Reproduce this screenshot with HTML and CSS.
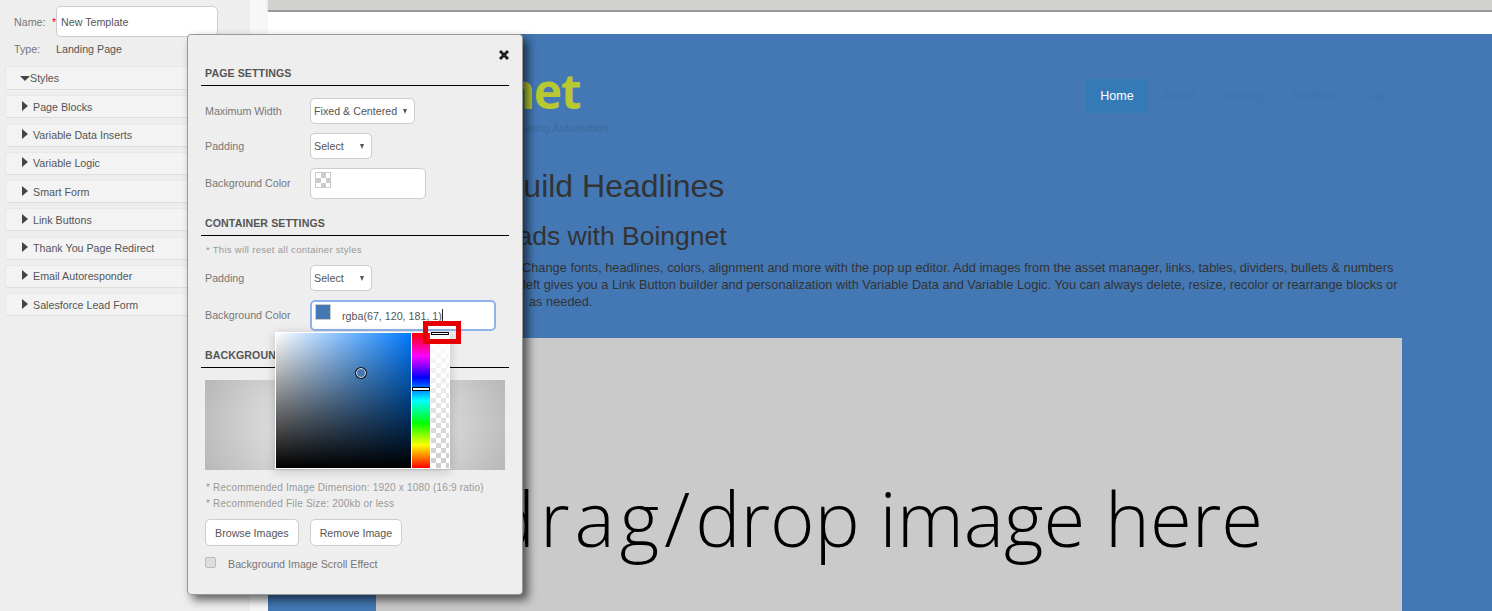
FILE: index.html
```html
<!DOCTYPE html>
<html lang="en">
<head>
    <meta charset="UTF-8">
    <title>New Template</title>
    <link rel="stylesheet" href="styles.css">
</head>
<body>
    <div class="app">
        <aside class="sidebar">
            <div class="name-row">
                <span class="side-label name-label">Name:</span>
                <span class="req">*</span>
                <div class="name-input">New Template</div>
            </div>
            <div class="type-row">
                <span class="side-label type-label">Type:</span>
                <span>Landing Page</span>
            </div>
            <div class="accordion">
                <div class="acc-item acc-open"><i class="arrow-down"></i>Styles</div>
                <div class="acc-item"><i class="arrow-right"></i>Page Blocks</div>
                <div class="acc-item"><i class="arrow-right"></i>Variable Data Inserts</div>
                <div class="acc-item"><i class="arrow-right"></i>Variable Logic</div>
                <div class="acc-item"><i class="arrow-right"></i>Smart Form</div>
                <div class="acc-item"><i class="arrow-right"></i>Link Buttons</div>
                <div class="acc-item"><i class="arrow-right"></i>Thank You Page Redirect</div>
                <div class="acc-item"><i class="arrow-right"></i>Email Autoresponder</div>
                <div class="acc-item"><i class="arrow-right"></i>Salesforce Lead Form</div>
            </div>
        </aside>
        <div class="gutter"></div>
        <main class="canvas">
            <div class="topbar"></div>
            <div class="white-strip"></div>
            <section class="page">
                <header class="page-header">
                    <div class="logo">
                        <div class="logo-name">Boingnet</div>
                        <div class="logo-tag">Marketing Automation</div>
                    </div>
                    <nav class="pills">
                        <a class="pill active">Home</a>
                        <a class="pill">About</a>
                        <a class="pill">Pricing</a>
                        <a class="pill">Another</a>
                        <a class="pill">Last</a>
                    </nav>
                </header>
                <h1 class="headline">Build Headlines</h1>
                <h2 class="subhead">Leads with Boingnet</h2>
                <p class="copy">
                    <span class="copy-line">Change fonts, headlines, colors, alignment and more with the pop up editor. Add images from the asset manager, links, tables, dividers, bullets &amp; numbers</span>
                    <span class="copy-line line-two">left gives you a Link Button builder and personalization with Variable Data and Variable Logic. You can always delete, resize, recolor or rearrange blocks or</span>
                    <span class="copy-line line-three">as needed.</span>
                </p>
                <div class="dropzone"><span class="drag-word">drag/</span>drop image here</div>
            </section>
        </main>
    </div>

    <div class="modal">
        <svg class="close" width="12" height="12" viewBox="0 0 12 12"><path d="M2 2l8 8M10 2l-8 8" stroke="#222" stroke-width="3"/></svg>

        <h3 class="section-title first">PAGE SETTINGS</h3>
        <div class="row row-first">
            <label>Maximum Width</label>
            <div class="select select-wide">Fixed &amp; Centered<i></i></div>
        </div>
        <div class="row">
            <label>Padding</label>
            <div class="select">Select<i></i></div>
        </div>
        <div class="row row-color">
            <label>Background Color</label>
            <div class="color-input"><span class="swatch swatch-empty"></span></div>
        </div>

        <h3 class="section-title">CONTAINER SETTINGS</h3>
        <div class="note note-reset">* This will reset all container styles</div>
        <div class="row">
            <label>Padding</label>
            <div class="select">Select<i></i></div>
        </div>
        <div class="row row-color">
            <label>Background Color</label>
            <div class="color-input focused"><span class="swatch swatch-blue"></span><span class="color-value">rgba(67, 120, 181, 1)</span><span class="caret"></span></div>
        </div>

        <h3 class="section-title">BACKGROUND IMAGE</h3>
        <div class="image-preview"></div>
        <div class="notes">
            <div class="note">* Recommended Image Dimension: 1920 x 1080 (16:9 ratio)</div>
            <div class="note">* Recommended File Size: 200kb or less</div>
        </div>
        <div class="buttons">
            <button class="btn">Browse Images</button>
            <button class="btn">Remove Image</button>
        </div>
        <div class="scroll-row">
            <span class="checkbox"></span>
            <span>Background Image Scroll Effect</span>
        </div>

        <div class="picker">
            <div class="sat">
                <span class="thumb"></span>
            </div>
            <div class="hue"><span class="hue-handle"></span></div>
            <div class="alpha"><span class="alpha-handle"></span></div>
        </div>
        <div class="highlight"></div>
    </div>
</body>
</html>
```

FILE: styles.css
```css
html, body { margin: 0; height: 611px; overflow: hidden; }
body { font-family: "Liberation Sans", Arial, sans-serif; font-size: 10.7px; color: #555; background: #eee; }
.app { display: flex; height: 611px; }

/* left sidebar */
.sidebar { width: 250px; flex: none; background: #eee; padding-top: 6px; box-sizing: border-box; }
.name-row { display: flex; align-items: center; height: 31px; padding-left: 14px; }
.side-label { color: #777; }
.name-label { width: 38px; }
.req { color: #f00; width: 4px; }
.name-input {
    width: 162px;
    height: 31px;
    box-sizing: border-box;
    line-height: 31px;
    padding-left: 4px;
    background: #fff;
    border: 1px solid #ccc;
    border-radius: 5px;
    color: #555;
}
.type-row { display: flex; height: 13px; margin-top: 6px; line-height: 13px; padding-left: 14px; color: #555; }
.type-label { width: 42px; }
.accordion { display: flex; flex-direction: column; gap: 5.25px; margin: 10px 10px 0 5px; }
.acc-item {
    display: flex;
    align-items: center;
    height: 23px;
    box-sizing: border-box;
    padding-left: 16px;
    background: #f3f3f3;
    border: 1px solid #e8e8e8;
    border-bottom-color: #ddd;
    border-radius: 3px;
    color: #555;
}
.acc-open { height: 24px; padding-left: 14px; }
.arrow-right {
    width: 0;
    height: 0;
    margin-right: 5px;
    border-left: 6px solid #444;
    border-top: 5px solid transparent;
    border-bottom: 5px solid transparent;
    position: relative;
    top: -1px;
}
.arrow-down {
    width: 0;
    height: 0;
    border-top: 5px solid #444;
    border-left: 5px solid transparent;
    border-right: 5px solid transparent;
}
.gutter { width: 18px; flex: none; background: #f7f7f7; }

/* page being edited */
.canvas { flex: 1; min-width: 0; background: #fff; display: flex; flex-direction: column; }
.topbar { height: 10px; flex: none; background: #d1d2cf; border-bottom: 2px solid #999; box-shadow: 0 1px 3px rgba(0,0,0,0.15); }
.white-strip { height: 22px; flex: none; background: #fff; }
.page { flex: 1; background: #4378b5; padding: 0 90px 0 108px; color: #333; overflow: hidden; }
.page-header { display: flex; height: 135px; }
.logo { width: 272px; margin-left: -40px; text-align: right; padding-top: 34px; box-sizing: border-box; }
.logo-name { font: bold 48px/46px "Open Sans", Arial, sans-serif; letter-spacing: -1.5px; color: #b8c832; padding-right: 28px; white-space: nowrap; }
.logo-tag { font-size: 11px; line-height: 13px; margin-top: 8px; color: #3d6a9f; white-space: nowrap; }
.pills { display: flex; gap: 1px; margin-left: auto; padding-top: 45px; font-size: 12.5px; height: 34px; }
.pill { padding: 0 14px; line-height: 34px; color: #3a74b5; border-radius: 4px; }
.pill.active { background: #337ab7; color: #fff; }
.headline { margin: 0 0 0 126px; font-size: 32px; font-weight: normal; line-height: 34px; }
.subhead { margin: 18px 0 0 112px; font-size: 26.5px; font-weight: normal; line-height: 30px; }
.copy { margin: 8px 0 0 146px; font-size: 12.8px; line-height: 17px; white-space: nowrap; }
.copy-line { display: block; }
.line-two { margin-left: 1px; }
.line-three { margin-left: 7px; }
.dropzone {
    height: 273px;
    margin-top: 28px;
    padding: 130px 139px 0 0;
    background: #cacaca;
    color: #000;
    font: 300 76px/100px "Open Sans", sans-serif;
    text-align: right;
    box-sizing: border-box;
    white-space: nowrap;
}
.drag-word { letter-spacing: 5px; }

/* style popup */
.modal {
    position: absolute;
    left: 187px;
    top: 34px;
    width: 336px;
    height: 561px;
    box-sizing: border-box;
    padding: 0 13px;
    background: #eee;
    border: 1px solid #999;
    border-radius: 4px;
    box-shadow: 5px 5px 10px rgba(0,0,0,0.6);
    color: #777;
}
.close { position: absolute; right: 12px; top: 14px; }
.section-title {
    margin: 16px 0 0;
    padding: 0 0 4px 4px;
    font-size: 10.6px;
    line-height: 16px;
    letter-spacing: 0.1px;
    font-weight: bold;
    color: #555;
    border-bottom: 1px solid #000;
}
.section-title.first { margin-top: 30px; }
.row { display: flex; align-items: center; margin: 9px 0 0 4px; }
.row-first { margin-top: 12px; }
.row label { width: 105px; flex: none; }
.row-color label { margin-top: -2px; }
.select {
    position: relative;
    width: 62px;
    height: 26px;
    box-sizing: border-box;
    line-height: 24px;
    padding-left: 3px;
    background: #fff;
    border: 1px solid #ccc;
    border-radius: 5px;
    color: #555;
}
.select-wide { width: 105px; }
.select i {
    position: absolute;
    right: 7px;
    top: 10px;
    border-top: 5px solid #555;
    border-left: 2.5px solid transparent;
    border-right: 2.5px solid transparent;
}
.color-input {
    display: flex;
    width: 116px;
    height: 31px;
    box-sizing: border-box;
    padding: 3px 4px;
    background: #fff;
    border: 1px solid #ccc;
    border-radius: 5px;
    color: #555;
}
.color-input.focused { width: 186px; border: 2px solid #8fb4ec; padding: 2px 3px; }
.swatch { width: 16px; height: 16px; box-sizing: border-box; flex: none; border: 1px solid #ccc; }
.swatch-empty { background: repeating-conic-gradient(#ccc 0 25%, #fff 0 50%) 0 0 / 10px 10px; }
.swatch-blue { background: #4378b5; }
.color-value { margin-left: 11px; line-height: 24px; }
.caret { width: 1px; height: 14px; margin-top: 5px; background: #222; }
.note { font-size: 10px; line-height: 16px; letter-spacing: 0.2px; color: #999; padding-left: 5px; }
.note-reset { margin-top: 7px; margin-bottom: 8px; font-size: 9.5px; line-height: 14px; letter-spacing: 0.3px; }
.note-reset + .row { margin-top: 0; }
.image-preview {
    height: 90px;
    margin: 12px 4px 0;
    background: radial-gradient(ellipse 170px 110px at center, #eee 0, #e2e2e2 40%, #b5b5b5 100%);
}
.notes { margin-top: 10px; }
.buttons { display: flex; gap: 11px; margin: 7px 0 0 4px; }
.btn {
    height: 27px;
    padding: 0 9px;
    font: 10.7px "Liberation Sans", Arial, sans-serif;
    color: #555;
    background: #fff;
    border: 1px solid #ccc;
    border-radius: 5px;
}
.scroll-row { display: flex; align-items: center; height: 13px; margin: 11px 0 0 4px; }
.checkbox { width: 9px; height: 9px; margin: -3px 12px 0 0; background: #ddd; border: 1px solid #bbb; border-radius: 2px; box-sizing: content-box; }

/* colour picker, opens over the popup */
.picker {
    position: absolute;
    left: 87px;
    top: 297px;
    display: flex;
    gap: 1px;
    padding: 1px;
    background: #fff;
    box-shadow: 0 2px 10px rgba(0,0,0,0.2);
}
.sat {
    position: relative;
    width: 135px;
    height: 135px;
    background:
        linear-gradient(to top, #000, rgba(0,0,0,0)),
        linear-gradient(to right, #fff, rgba(255,255,255,0)),
        #007bff;
}
.thumb {
    position: absolute;
    left: 80px;
    top: 35px;
    width: 8px;
    height: 8px;
    background: #4378b5;
    border: 1px solid #cde;
    border-radius: 50%;
    box-shadow: 0 0 0 1px #111;
}
.hue {
    position: relative;
    width: 18px;
    height: 135px;
    background: linear-gradient(to bottom, #f00, #f0f 17%, #00f 33%, #0ff 50%, #0f0 67%, #ff0 83%, #f00);
}
.hue-handle { position: absolute; left: 0; right: 0; top: 54px; height: 2px; background: #fff; border: 1px solid #000; }
.alpha {
    position: relative;
    width: 18px;
    height: 135px;
    background:
        linear-gradient(to bottom, #fff, rgba(255,255,255,0)),
        repeating-conic-gradient(#ccc 0 25%, #fff 0 50%) 0 0 / 10px 10px;
}
.alpha-handle { position: absolute; left: 0; right: 0; top: -1px; height: 1px; background: #fff; border: 1px solid #000; }
.highlight { position: absolute; left: 235px; top: 286px; width: 38px; height: 23px; box-sizing: border-box; border: 5px solid #e60000; }
```
